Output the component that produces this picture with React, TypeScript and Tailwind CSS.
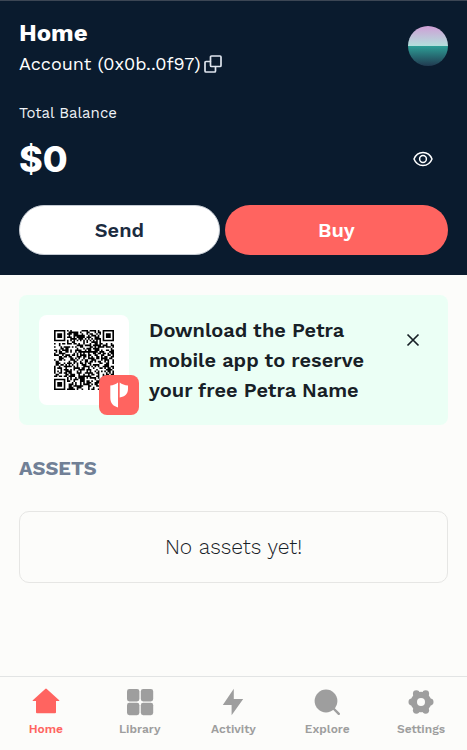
import React from "react";

const QR_SIZE = 37;

function isFinder(x: number, y: number): boolean | null {
  const corners = [
    [0, 0],
    [QR_SIZE - 7, 0],
    [0, QR_SIZE - 7],
  ];
  for (const [cx, cy] of corners) {
    const dx = x - cx;
    const dy = y - cy;
    if (dx >= -1 && dx <= 7 && dy >= -1 && dy <= 7) {
      const ring = Math.max(Math.abs(dx - 3), Math.abs(dy - 3));
      return ring === 3 || ring <= 1;
    }
  }
  return null;
}

function buildQrPath(): string {
  let seed = 20231;
  let path = "";
  for (let y = 0; y < QR_SIZE; y++) {
    for (let x = 0; x < QR_SIZE; x++) {
      seed = (seed * 48271) % 2147483647;
      const finder = isFinder(x, y);
      let dark = finder === null ? seed / 2147483647 > 0.46 : finder;
      if (finder === null && (x === 6 || y === 6)) dark = (x + y) % 2 === 0;
      if (dark) path += `M${x} ${y}h1v1h-1z`;
    }
  }
  return path;
}

const qrPath = buildQrPath();

function QrCode() {
  return (
    <svg viewBox="0 0 37 37" className="size-15" role="img" aria-label="QR code">
      <path d={qrPath} fill="#000" />
    </svg>
  );
}

function PetraBadge() {
  return (
    <svg viewBox="0 0 40 40" className="absolute -right-[10px] -bottom-[10px] size-10" aria-hidden="true">
      <rect width="40" height="40" rx="8" fill="#ff6460" />
      <path d="M19 7.600v24.800c-5-1.200-7.700-4.400-7.700-9.600V10.600c2.900-.2 5.400-1.200 7.700-3z" fill="#fff" />
      <path d="M20.700 7.600c2.300 1.800 5 2.800 8.300 3v3.200c0 5-3 8.200-8.300 8.600z" fill="#fff" />
    </svg>
  );
}

function CopyIcon() {
  return (
    <svg viewBox="0 0 18 18" className="size-[18px]" fill="none" stroke="currentColor" strokeWidth="1.700" strokeLinejoin="round" aria-hidden="true">
      <path d="M6.500 6.500V2a1 1 0 0 1 1-1H16a1 1 0 0 1 1 1v8.500a1 1 0 0 1-1 1h-4.500" />
      <path d="M6.500 6.500H2a1 1 0 0 0-1 1V16a1 1 0 0 0 1 1h8.500a1 1 0 0 0 1-1v-4.500h-4a1 1 0 0 1-1-1z" />
    </svg>
  );
}

function EyeIcon() {
  return (
    <svg viewBox="0 0 20 16" className="h-4 w-5" fill="none" stroke="currentColor" strokeWidth="1.500" aria-hidden="true">
      <path d="M1 8c1.700-4.300 5-6.500 9-6.500S17.300 3.700 19 8c-1.700 4.300-5 6.500-9 6.500S2.700 12.300 1 8z" strokeLinejoin="round" />
      <circle cx="10" cy="8" r="3.400" />
    </svg>
  );
}

const iconClass = "size-7";

const tabs = [
  {
    label: "Home",
    icon: (
      <svg viewBox="0 0 28 28" className={iconClass} fill="currentColor" aria-hidden="true">
        <path d="M13.200.9a1.200 1.200 0 0 1 1.600 0L27.200 12.200c.3.300.2.800-.3.800H24v11.300a1 1 0 0 1-1 1H5a1 1 0 0 1-1-1V13H1.100c-.500 0-.600-.500-.3-.8z" />
      </svg>
    ),
  },
  {
    label: "Library",
    icon: (
      <svg viewBox="0 0 28 28" className={iconClass} fill="currentColor" aria-hidden="true">
        <rect x="1" y="1" width="12.400" height="12.400" rx="2.400" />
        <rect x="14.800" y="1" width="12.400" height="12.400" rx="2.400" />
        <rect x="1" y="14.800" width="12.400" height="12.400" rx="2.400" />
        <rect x="14.800" y="14.800" width="12.400" height="12.400" rx="2.400" />
      </svg>
    ),
  },
  {
    label: "Activity",
    icon: (
      <svg viewBox="0 0 28 28" className={iconClass} fill="currentColor" aria-hidden="true">
        <path d="M14.800.8V11h9.400L12.600 27.300V17H3.800z" />
      </svg>
    ),
  },
  {
    label: "Explore",
    icon: (
      <svg viewBox="0 0 28 28" className={iconClass} fill="currentColor" aria-hidden="true">
        <circle cx="13" cy="13" r="11.400" />
        <path d="M19.500 19.500l6.300 6.300" stroke="currentColor" strokeWidth="2.400" strokeLinecap="round" />
      </svg>
    ),
  },
  {
    label: "Settings",
    icon: (
      <svg viewBox="0 0 28 28" className={iconClass} fill="currentColor" aria-hidden="true">
        <circle cx="14" cy="14" r="10.300" />
        <circle cx="4.900" cy="14" r="3.400" />
        <circle cx="23.100" cy="14" r="3.400" />
        <circle cx="9.300" cy="5.700" r="3.400" />
        <circle cx="18.700" cy="5.700" r="3.400" />
        <circle cx="9.300" cy="22.300" r="3.400" />
        <circle cx="18.700" cy="22.300" r="3.400" />
        <circle cx="14" cy="14" r="4" fill="#fcfcfa" />
      </svg>
    ),
  },
];

export default function App() {
  return (
    <div className="flex min-h-screen flex-col bg-[#fcfcfa] font-['Work_Sans',Inter,sans-serif] text-[#172026]">
      <header className="border-t border-[#3c4654] bg-[#0a1b2e] px-[19px] pb-5 text-white">
        <div className="flex items-start justify-between pt-4">
          <div>
            <h1 className="text-2xl leading-8 font-bold">Home</h1>
            <div className="flex h-[30px] items-center gap-[3px]">
              <span className="text-lg leading-6">Account (0x0b..0f97)</span>
              <button type="button" aria-label="Copy address" className="text-[#dfe5ee]">
                <CopyIcon />
              </button>
            </div>
          </div>
          <button
            type="button"
            aria-label="Account menu"
            className="mt-[9px] size-10 rounded-full bg-[linear-gradient(#cf9fd6_0%,#b3e0dc_50%,#2d9f96_50%,#213a50_100%)]"
          />
        </div>
        <p className="mt-6 text-[15px] leading-5 text-[#f0f3f7]">Total Balance</p>
        <div className="mt-3 flex h-12 items-center justify-between pr-[15px]">
          <p className="font-[Inter,sans-serif] text-4xl leading-12 font-extrabold">$0</p>
          <button type="button" aria-label="Hide balance">
            <EyeIcon />
          </button>
        </div>
        <div className="mt-[22px] grid grid-cols-[9fr_10fr] gap-[5px]">
          <button type="button" className="h-[50px] rounded-full border border-[#c5cbd3] bg-white text-xl font-semibold text-[#1b2b40]">
            Send
          </button>
          <button type="button" className="h-[50px] rounded-full bg-[#ff6460] text-xl font-semibold text-white">
            Buy
          </button>
        </div>
      </header>

      <main className="flex-1 px-[19px] pt-5">
        <section className="flex items-start rounded-lg bg-[#ebfff5] p-5">
          <div className="relative flex size-[90px] shrink-0 items-center justify-center rounded-lg bg-white">
            <QrCode />
            <PetraBadge />
          </div>
          <p className="ml-5 flex-1 text-xl leading-[30px] font-semibold">
            Download the Petra
            <br />
            mobile app to reserve
            <br />
            your free Petra Name
          </p>
          <button type="button" aria-label="Close" className="mt-[18px] mr-2 shrink-0">
            <svg viewBox="0 0 14 14" className="size-[14px]" fill="none" stroke="currentColor" strokeWidth="1.700" aria-hidden="true">
              <path d="M1.500 1.500l11 11M12.500 1.500l-11 11" />
            </svg>
          </button>
        </section>
        <h2 className="mt-7 text-xl leading-[30px] font-bold text-[#718096]">ASSETS</h2>
        <div className="mt-7 flex h-[72px] items-center justify-center rounded-[10px] border border-[#e6e6e4] text-[21px] font-light">
          No assets yet!
        </div>
      </main>

      <nav className="-mx-px grid h-[74px] grid-cols-5 border-t border-[#e2e4e4] pt-[11px]">
        {tabs.map((tab, index) => (
          <a
            key={tab.label}
            href="#"
            aria-current={index === 0 ? "page" : undefined}
            className={`flex flex-col items-center gap-[3px] font-semibold ${index === 0 ? "text-[#ff6460]" : "text-[#9e9e9e]"}`}
          >
            {tab.icon}
            <span className="text-xs leading-5">{tab.label}</span>
          </a>
        ))}
      </nav>
    </div>
  );
}
